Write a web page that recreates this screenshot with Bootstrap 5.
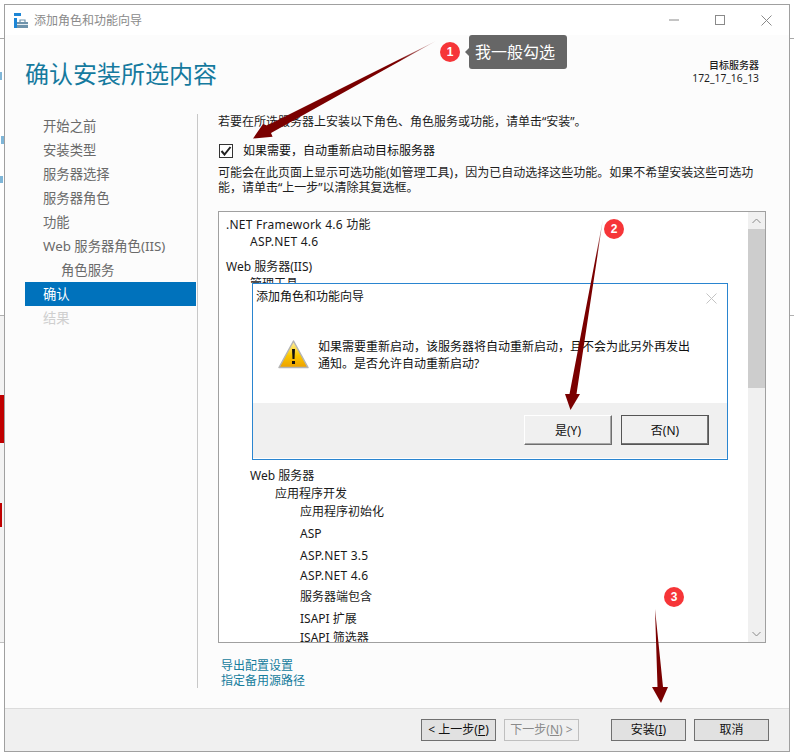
<!DOCTYPE html>
<html lang="zh-CN">
<head>
<meta charset="utf-8">
<title>添加角色和功能向导</title>
<link href="https://cdn.jsdelivr.net/npm/bootstrap@5.3.0/dist/css/bootstrap.min.css" rel="stylesheet">
<style>
html,body{height:100%;}
body{width:794px;height:755px;overflow:hidden;position:relative;margin:0;background:#fff;color:#1e1e1e;font-family:"Noto Sans","Noto Sans CJK SC",sans-serif;font-size:12px;line-height:15px;}
.side-strip{width:4px;height:755px;flex:none;display:block;}
.wiz-window{width:786px;height:748px;margin-top:4px;flex:none;background:#fcfcfc;border:1px solid #a0a0a0;}
.wiz-titlebar{height:30px;background:#fff;padding-left:9px;padding-right:0;color:#8a8a8a;}
.wiz-titlebar svg.appicon{margin-right:6px;}
.winctl{width:46px;display:flex;justify-content:center;}
.wiz-head{height:79px;padding:24px 30px 0 20px;}
.wiz-heading{font-size:24px;line-height:30px;color:#157a9e;font-weight:400;margin:0;}
.wiz-target{font-size:10.3px;line-height:13px;text-align:right;color:#1e1e1e;}
.wiz-target b{font-weight:500;font-size:10px;}
.wiz-content{height:574px;}
.wiz-nav{width:193px;height:574px;flex:none;border-right:1px solid #c8c8c8;padding:0 1px 0 20px;margin:0;list-style:none;color:#6a6a6a;font-size:13.33px;}
.wiz-nav li{height:24px;line-height:24px;padding-left:18px;}
.wiz-nav li.sub{padding-left:36px;}
.wiz-nav li.act{background:#0072bc;color:#fff;}
.wiz-nav li.off{color:#cfcfcf;}
.wiz-main{padding-left:20px;width:568px;}
.chk-row{margin-top:14px;height:15px;color:#111;}
.chk-box{width:14px;height:14px;background:#fff;border:1px solid #333;margin:0 10px 0 1px;display:flex;align-items:center;justify-content:center;flex:none;}
.note{margin-top:7px;width:540px;}
.detail-box{margin-top:16px;width:548px;height:432px;background:#fff;border:1px solid #a0a0a0;color:#1a1a1a;}
.detail-list{flex:1;overflow:hidden;padding-top:4px;}
.rw{height:17px;line-height:17px;white-space:nowrap;}
.rw.lat{letter-spacing:.25px;}
.lv0{padding-left:7px;}.lv1{padding-left:31px;}.lv2{padding-left:56px;}.lv3{padding-left:81px;}
.g1{margin-top:1px;}.g2{margin-top:2px;}.g3{margin-top:3px;}.g4{margin-top:4px;}.g5{margin-top:5px;}.g8{margin-top:8px;}
.g175{margin-top:175px;}
.sbar{width:17px;flex:none;background:#f0f0f0;}
.sbtn{height:17px;display:flex;align-items:center;justify-content:center;}
.sthumb{height:159px;background:#cdcdcd;}
.wiz-links{margin-top:15px;padding-left:3px;color:#167d9d;}
.wiz-links div{line-height:15px;}
.wiz-foot{height:43px;background:#f0f0f0;border-top:1px solid #dcdcdc;padding:10px 20px 0 0;}
.wbtn{width:75px;height:22px;padding:0;font:inherit;font-size:12px;line-height:20px;background:#e1e1e1;border:1px solid #707070;border-radius:0;color:#111;}
.wbtn:hover{background:#e1e1e1;border-color:#707070;color:#111;}
.wbtn.dim,.wbtn.dim:disabled{background:#f0f0f0;border-color:#bfbfbf;color:#8a8a8a;opacity:1;margin:0 32px 0 8px;}
.wbtn.last{margin-left:8px;}
.alert-dlg{position:absolute;left:252px;top:283px;width:476px;height:177px;background:#fff;border:1px solid #2a85d0;color:#111;font-size:12px;}
.alert-title{height:23px;padding:5px 10px 0 3px;line-height:16px;}
.alert-body{height:96px;padding:33px 0 0 25px;}
.alert-msg{margin-left:9px;line-height:17px;margin-top:-2px;width:380px;}
.alert-foot{height:55px;background:#f0f0f0;padding:12px 18px 0 0;}
.dbtn{width:88px;height:30px;padding:0;border-radius:0;font:inherit;font-size:12px;background:#f0f0f0;color:#111;border:1px solid;border-color:#fff #6e6e6e #6e6e6e #fff;box-shadow:inset -1px -1px 0 #a8a8a8;}
.dbtn:hover{background:#f0f0f0;border-color:#fff #6e6e6e #6e6e6e #fff;color:#111;}
.dbtn.no{margin-left:9px;border-color:#555;box-shadow:inset -1px -1px 0 #777;}
.step-dot{position:absolute;width:20px;height:20px;border-radius:50%;background:#f63538;color:#fff;font-size:12px;line-height:20px;text-align:center;font-family:"Liberation Sans",sans-serif;font-weight:700;}
.dot1{left:440px;top:42px;}.dot2{left:604px;top:219px;}.dot3{left:664px;top:587px;}
.step-tip{position:absolute;left:469px;top:35px;width:98px;height:34px;background:#666;border-radius:3px;color:#fff;font-size:16px;line-height:34px;padding-left:6px;white-space:nowrap;}
.step-tip::before{content:"";position:absolute;left:-4px;top:13px;border:4px solid transparent;border-left:0;border-right-color:#666;}
.arrows{position:absolute;left:0;top:0;pointer-events:none;}
</style>
</head>
<body>
<div class="d-flex">
  <svg class="side-strip" viewBox="0 0 4 755" aria-hidden="true">
    <rect width="4" height="755" fill="#fff"/>
    <rect y="38" width="4" height="1" fill="#a8a8a8"/>
    <rect y="316" width="4" height="326" fill="#f3f3f3"/>
    <rect y="315" width="4" height="1" fill="#b0b0b0"/>
    <rect y="642" width="4" height="1" fill="#c0c0c0"/>
    <rect y="395" width="4" height="48" fill="#c00000"/>
    <rect y="503" width="2" height="24" fill="#c00000"/>
    <rect x="0" y="72" width="2" height="8" fill="#7fb6d8"/>
    <rect x="1" y="136" width="3" height="8" fill="#7fb6d8"/>
    <rect x="0" y="176" width="3" height="7" fill="#7fb6d8"/>
  </svg>
  <div class="wiz-window d-flex flex-column">
    <div class="wiz-titlebar d-flex align-items-center">
      <svg class="appicon" width="14" height="15" viewBox="0 0 14 15" aria-hidden="true">
        <rect x="0" y="0" width="7" height="3" fill="#1d86d6"/>
        <rect x="0" y="5" width="3" height="10" fill="#1d86d6"/>
        <rect x="3" y="12" width="2" height="3" fill="#1d86d6"/>
        <path d="M3 9h11v6H3z" fill="#6f93ab"/>
        <path d="M6 9V7h5v2" fill="none" stroke="#6f93ab" stroke-width="1.2"/>
        <rect x="3" y="11" width="11" height="1" fill="#e4ecf1"/>
      </svg>
      <span>添加角色和功能向导</span>
      <div class="ms-auto d-flex">
        <div class="winctl"><svg width="10" height="10" viewBox="0 0 10 10" aria-hidden="true"><path d="M0 5h10" stroke="#8a8a8a"/></svg></div>
        <div class="winctl"><svg width="10" height="10" viewBox="0 0 10 10" aria-hidden="true"><rect x=".5" y=".5" width="9" height="9" fill="none" stroke="#8a8a8a"/></svg></div>
        <div class="winctl"><svg width="11" height="11" viewBox="0 0 11 11" aria-hidden="true"><path d="M.5.5l10 10M10.500.5l-10 10" stroke="#8a8a8a" fill="none"/></svg></div>
      </div>
    </div>
    <div class="wiz-head d-flex justify-content-between">
      <h1 class="wiz-heading">确认安装所选内容</h1>
      <div class="wiz-target"><b>目标服务器</b><br>172_17_16_13</div>
    </div>
    <div class="wiz-content d-flex">
      <ul class="wiz-nav">
        <li>开始之前</li>
        <li>安装类型</li>
        <li>服务器选择</li>
        <li>服务器角色</li>
        <li>功能</li>
        <li>Web 服务器角色(IIS)</li>
        <li class="sub">角色服务</li>
        <li class="act">确认</li>
        <li class="off">结果</li>
      </ul>
      <div class="wiz-main">
        <div>若要在所选服务器上安装以下角色、角色服务或功能，请单击“安装”。</div>
        <div class="chk-row d-flex align-items-center">
          <span class="chk-box"><svg width="12" height="10" viewBox="0 0 12 10" aria-hidden="true"><path d="M1.500 5l3 3.500 6-7.500" fill="none" stroke="#222" stroke-width="2"/></svg></span>
          <span>如果需要，自动重新启动目标服务器</span>
        </div>
        <div class="note">可能会在此页面上显示可选功能(如管理工具)，因为已自动选择这些功能。如果不希望安装这些可选功能，请单击“上一步”以清除其复选框。</div>
        <div class="detail-box d-flex">
          <div class="detail-list">
            <div class="rw lv0 lat">.NET Framework 4.6 功能</div>
            <div class="rw lv1 lat">ASP.NET 4.6</div>
            <div class="rw lv0 g8">Web 服务器(IIS)</div>
            <div class="rw lv1">管理工具</div>
            <div class="rw lv1 g175">Web 服务器</div>
            <div class="rw lv2 g1">应用程序开发</div>
            <div class="rw lv3 g1">应用程序初始化</div>
            <div class="rw lv3 g5">ASP</div>
            <div class="rw lv3 g5 lat">ASP.NET 3.5</div>
            <div class="rw lv3 g3 lat">ASP.NET 4.6</div>
            <div class="rw lv3 g4">服务器端包含</div>
            <div class="rw lv3 g5">ISAPI 扩展</div>
            <div class="rw lv3 g2">ISAPI 筛选器</div>
          </div>
          <div class="sbar d-flex flex-column">
            <div class="sbtn"><svg width="9" height="6" viewBox="0 0 9 6" aria-hidden="true"><path d="M.5 5l4-4 4 4" fill="none" stroke="#8a8a8a"/></svg></div>
            <div class="sthumb"></div>
            <div class="sbtn mt-auto"><svg width="9" height="6" viewBox="0 0 9 6" aria-hidden="true"><path d="M.5 1l4 4 4-4" fill="none" stroke="#8a8a8a"/></svg></div>
          </div>
        </div>
        <div class="wiz-links">
          <div>导出配置设置</div>
          <div>指定备用源路径</div>
        </div>
      </div>
    </div>
    <div class="wiz-foot d-flex justify-content-end mt-auto">
      <button type="button" class="btn wbtn">&lt; 上一步(<u>P</u>)</button>
      <button type="button" class="btn wbtn dim" disabled>下一步(<u>N</u>) &gt;</button>
      <button type="button" class="btn wbtn">安装(<u>I</u>)</button>
      <button type="button" class="btn wbtn last">取消</button>
    </div>
  </div>
  <svg class="side-strip" viewBox="0 0 4 755" aria-hidden="true">
    <rect width="4" height="755" fill="#fff"/>
    <rect y="38" width="4" height="1" fill="#a8a8a8"/>
    <rect y="315" width="4" height="1" fill="#b0b0b0"/>
  </svg>
</div>

<div class="alert-dlg d-flex flex-column">
  <div class="alert-title d-flex justify-content-between">
    <span>添加角色和功能向导</span>
    <svg class="mt-1" width="11" height="11" viewBox="0 0 11 11" aria-hidden="true"><path d="M.5.5l10 10M10.500.5l-10 10" stroke="#c4c4c4" fill="none"/></svg>
  </div>
  <div class="alert-body d-flex">
    <svg width="31" height="29" viewBox="0 0 31 29" aria-hidden="true">
      <defs><linearGradient id="wy" x1="0" y1="0" x2="0" y2="1"><stop offset="0" stop-color="#fff2a8"/><stop offset=".55" stop-color="#fbc800"/><stop offset="1" stop-color="#eda000"/></linearGradient></defs>
      <path d="M15.500 1L30 27.500H1z" fill="url(#wy)" stroke="#b4b4b4" stroke-width="1.500" stroke-linejoin="round"/>
      <path d="M14 9h3l-.5 10h-2z" fill="#111"/>
      <rect x="14" y="21" width="3" height="3" fill="#111"/>
    </svg>
    <div class="alert-msg">如果需要重新启动，该服务器将自动重新启动，且不会为此另外再发出通知。是否允许自动重新启动?</div>
  </div>
  <div class="alert-foot d-flex justify-content-end align-items-start">
    <button type="button" class="btn dbtn">是(Y)</button>
    <button type="button" class="btn dbtn no">否(N)</button>
  </div>
</div>

<svg class="arrows" width="794" height="755" viewBox="0 0 794 755" aria-hidden="true">
  <defs>
    <linearGradient id="fa1" gradientUnits="userSpaceOnUse" x1="436" y1="41" x2="253" y2="138"><stop offset="0" stop-color="#7a0000" stop-opacity=".2"/><stop offset=".2" stop-color="#7a0000"/></linearGradient>
    <linearGradient id="fa2" gradientUnits="userSpaceOnUse" x1="603" y1="219" x2="570" y2="409"><stop offset="0" stop-color="#7a0000" stop-opacity=".2"/><stop offset=".2" stop-color="#7a0000"/></linearGradient>
  </defs>
  <path d="M436 41L271 133 272.600 136.700 253 138.500 263 124 267 125.500z" fill="url(#fa1)"/>
  <path d="M603 219L576.500 394 580 394 570.500 410 565 394 569.500 394z" fill="url(#fa2)"/>
  <path d="M655 609L657.500 687 652 687 661 703 668 687 663 687z" fill="#7a0000"/>
</svg>

<div class="step-dot dot1">1</div>
<div class="step-tip">我一般勾选</div>
<div class="step-dot dot2">2</div>
<div class="step-dot dot3">3</div>
</body>
</html>
